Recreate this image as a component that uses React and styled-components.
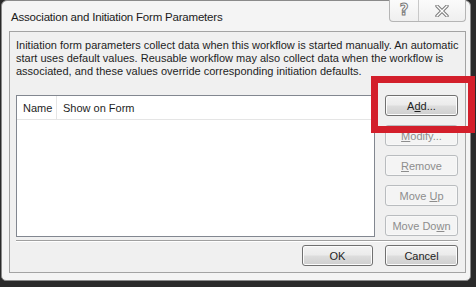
import React from "react";
import styled, { createGlobalStyle } from "styled-components";

const GlobalStyle = createGlobalStyle`
  html, body {
    margin: 0;
    padding: 0;
    background: #2a2a2a;
  }
  body {
    font-family: "Liberation Sans", Arial, sans-serif;
    font-size: 11px;
    color: #1e1e1e;
  }
`;

const Screen = styled.div`
  position: relative;
  width: 476px;
  height: 287px;
  overflow: hidden;
  padding: 0 0 0 1px;
  box-sizing: border-box;
`;

const Window = styled.div`
  width: 470px;
  height: 281px;
  box-sizing: border-box;
  border: 1px solid #8a8a8a;
  border-radius: 6px 6px 5px 5px;
  background: #f4f4f4;
  display: flex;
  flex-direction: column;
  padding: 0 4px 7px 7px;
`;

const TitleBar = styled.div`
  height: 30px;
  display: flex;
  justify-content: space-between;
  align-items: flex-start;
`;

const Title = styled.div`
  padding: 10px 0 0 2px;
  font-size: 11.5px;
  letter-spacing: -0.2px;
  color: #1b1b1b;
`;

const CaptionButtons = styled.div`
  display: flex;
  height: 21px;
  margin-top: -1px;
  border: 1px solid #b5b5b5;
  border-top: none;
  border-radius: 0 0 4px 4px;
  background: linear-gradient(#fbfbfb, #efefef);
`;

const CaptionButton = styled.div`
  width: ${(p) => p.w}px;
  display: flex;
  align-items: center;
  justify-content: center;
  border-left: ${(p) => (p.first ? "none" : "1px solid #c8c8c8")};
`;

const HelpGlyph = styled.span`
  font-family: "DejaVu Sans", sans-serif;
  font-size: 15px;
  font-weight: bold;
  color: #ffffff;
  -webkit-text-stroke: 1px #7a7a7a;
  line-height: 1;
`;

const Panel = styled.div`
  flex: 1;
  border: 1px solid #a3a3a3;
  background: #f0f0f0;
  padding: 7px 7px 6px 6px;
  display: flex;
  flex-direction: column;
`;

const Description = styled.div`
  font-size: 11px;
  line-height: 13px;
  color: #1e1e1e;
  white-space: nowrap;
`;

const Body = styled.div`
  margin-top: 17px;
  display: flex;
  gap: 10px;
`;

const List = styled.div`
  width: 360px;
  height: 142px;
  box-sizing: border-box;
  border: 1px solid #828790;
  background: #ffffff;
`;

const HeaderRow = styled.div`
  display: flex;
  height: 23px;
  border-bottom: 1px solid #e5e5e5;
`;

const HeaderCell = styled.div`
  width: ${(p) => p.w}px;
  box-sizing: border-box;
  padding-left: 6px;
  display: flex;
  align-items: center;
  border-right: ${(p) => (p.sep ? "1px solid #e5e5e5" : "none")};
  color: #1e1e1e;
`;

const ButtonColumn = styled.div`
  display: flex;
  flex-direction: column;
  gap: 9px;
`;

const Button = styled.div`
  width: ${(p) => p.w || 73}px;
  height: 21px;
  box-sizing: border-box;
  border: 1px solid ${(p) => (p.disabled ? "#b9bcbf" : "#707070")};
  border-radius: 3px;
  display: flex;
  align-items: center;
  justify-content: center;
  white-space: pre;
  color: ${(p) => (p.disabled ? "#8d8d8d" : "#1e1e1e")};
  background: ${(p) =>
    p.disabled
      ? "#f4f4f4"
      : "linear-gradient(#f3f3f3 0%, #ebebeb 48%, #dddddd 52%, #cfcfcf 100%)"};
  box-shadow: inset 0 0 0 1px ${(p) => (p.disabled ? "#f8f8f8" : "#fcfcfc")};
`;

const Key = styled.span`
  text-decoration: underline;
`;

const Divider = styled.div`
  margin-top: 3px;
  height: 0;
  border-top: 1px solid #a0a0a0;
  border-bottom: 1px solid #ffffff;
`;

const Footer = styled.div`
  margin-top: 3px;
  display: flex;
  justify-content: flex-end;
  gap: 12px;
`;

const Highlight = styled.div`
  position: absolute;
  left: 371px;
  top: 76px;
  width: 104px;
  height: 57px;
  box-sizing: border-box;
  border: 7px solid #d31f2b;
`;

function CloseGlyph() {
  return (
    <svg width="14" height="12" viewBox="0 0 14 12">
      <path d="M2 1 L12 11 M12 1 L2 11" stroke="#7a7a7a" strokeWidth="3.4" strokeLinecap="round" />
      <path d="M2 1 L12 11 M12 1 L2 11" stroke="#ffffff" strokeWidth="1.4" strokeLinecap="round" />
    </svg>
  );
}

export default function App() {
  return (
    <>
      <GlobalStyle />
      <Screen>
        <Window>
          <TitleBar>
            <Title>Association and Initiation Form Parameters</Title>
            <CaptionButtons>
              <CaptionButton w={28} first>
                <HelpGlyph>?</HelpGlyph>
              </CaptionButton>
              <CaptionButton w={46}>
                <CloseGlyph />
              </CaptionButton>
            </CaptionButtons>
          </TitleBar>
          <Panel>
            <Description>
              Initiation form parameters collect data when this workflow is started manually. An automatic
              <br />
              start uses default values. Reusable workflow may also collect data when the workflow is
              <br />
              associated, and these values override corresponding initiation defaults.
            </Description>
            <Body>
              <List>
                <HeaderRow>
                  <HeaderCell w={40} sep>Name</HeaderCell>
                  <HeaderCell w={300}>Show on Form</HeaderCell>
                </HeaderRow>
              </List>
              <ButtonColumn>
                <Button>
                  A<Key>d</Key>d...
                </Button>
                <Button disabled>
                  <Key>M</Key>odify...
                </Button>
                <Button disabled>
                  <Key>R</Key>emove
                </Button>
                <Button disabled>
                  {"Move "}<Key>U</Key>p
                </Button>
                <Button disabled>
                  {"Move Do"}<Key>w</Key>n
                </Button>
              </ButtonColumn>
            </Body>
            <Divider />
            <Footer>
              <Button w={71}>OK</Button>
              <Button>Cancel</Button>
            </Footer>
          </Panel>
        </Window>
        <Highlight />
      </Screen>
    </>
  );
}
